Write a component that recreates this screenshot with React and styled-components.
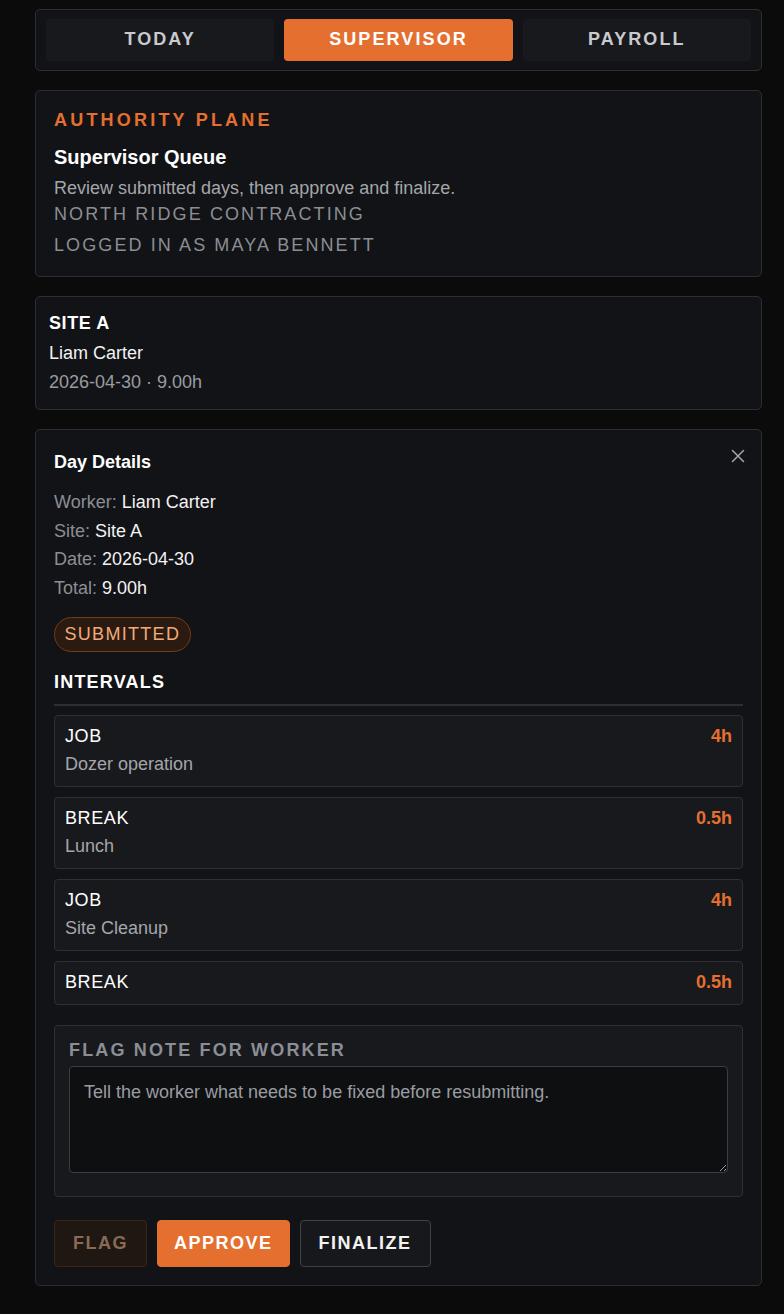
import React, { useState } from 'react';
import styled, { createGlobalStyle } from 'styled-components';

const GlobalStyle = createGlobalStyle`
  * { box-sizing: border-box; }
  body {
    margin: 0;
    background: #0b0b0c;
    font-family: "Liberation Sans", Arial, sans-serif;
    font-size: 18px;
    color: #f2f2f3;
  }
`;

const Page = styled.div`
  width: 784px;
  padding: 9px 22px 28px 35px;
  display: flex;
  flex-direction: column;
  gap: 19px;
`;

const Card = styled.section`
  background: #121316;
  border: 1.5px solid #2c2e33;
  border-radius: 5px;
  padding: ${({ pad }) => pad || '18px'};
  position: relative;
`;

const TabBar = styled(Card)`
  display: grid;
  grid-template-columns: repeat(3, 1fr);
  gap: 10px;
  padding: 8.5px 10px 9.5px;
`;

const Tab = styled.button`
  height: 42px;
  border: none;
  border-radius: 4px;
  background: ${({ active }) => (active ? '#e56f2f' : '#18191d')};
  color: ${({ active }) => (active ? '#ffffff' : '#c9cacd')};
  font-family: inherit;
  font-size: 18px;
  font-weight: 700;
  letter-spacing: 2.1px;
  cursor: pointer;
`;

const Eyebrow = styled.div`
  color: #e56f2f;
  font-size: 18px;
  font-weight: 700;
  letter-spacing: 3.2px;
  line-height: 21px;
`;

const Title = styled.h2`
  margin: 15px 0 0;
  font-size: 20px;
  line-height: 23px;
  font-weight: 700;
  color: #ffffff;
`;

const Muted = styled.p`
  margin: 9px 0 0;
  font-size: 18px;
  line-height: 21px;
  color: #a4a6ab;
`;

const Caps = styled.div`
  margin-top: ${({ mt }) => mt || '5px'};
  font-size: 18px;
  line-height: 21px;
  letter-spacing: 2.1px;
  color: #8b8e94;
`;

const SiteName = styled.div`
  font-size: 18px;
  line-height: 21px;
  font-weight: 700;
  letter-spacing: 0.6px;
  color: #ffffff;
`;

const Line = styled.div`
  font-size: 18px;
  line-height: 21px;
  color: ${({ dim }) => (dim ? '#9a9ca1' : '#f2f2f3')};
  margin-top: ${({ mt }) => mt || '9px'};
`;

const DetailTitle = styled.h3`
  margin: 4px 0 0;
  font-size: 18px;
  line-height: 21px;
  font-weight: 700;
  color: #ffffff;
`;

const CloseButton = styled.button`
  position: absolute;
  top: 15px;
  right: 12px;
  background: none;
  border: none;
  padding: 4px;
  color: #a4a6ab;
  cursor: pointer;
  display: flex;
`;

const Facts = styled.div`
  margin-top: 19px;
  display: flex;
  flex-direction: column;
  gap: 7.5px;
`;

const Fact = styled.div`
  font-size: 18px;
  line-height: 21px;
  color: #f2f2f3;
  span { color: #8b8e94; }
`;

const Badge = styled.span`
  display: inline-block;
  margin-top: 18.5px;
  padding: 6px 9.5px;
  border-radius: 999px;
  border: 1.5px solid #7a3a14;
  background: #2a1a10;
  color: #f3aa7a;
  font-size: 18px;
  letter-spacing: 1.3px;
  line-height: 21px;
`;

const SectionHead = styled.div`
  margin-top: 20px;
  padding-bottom: 10.5px;
  border-bottom: 2px solid #2c2e33;
  font-size: 18px;
  line-height: 21px;
  font-weight: 700;
  letter-spacing: 1.2px;
  color: #ffffff;
`;

const IntervalList = styled.div`
  margin-top: 9px;
  display: flex;
  flex-direction: column;
  gap: 10px;
`;

const Interval = styled.div`
  background: #18191d;
  border: 1.5px solid #2e3036;
  border-radius: 4px;
  padding: 10.5px 10px;
`;

const IntervalTop = styled.div`
  display: flex;
  justify-content: space-between;
  align-items: baseline;
  font-size: 18px;
  line-height: 21px;
`;

const Kind = styled.span`
  color: #ffffff;
  letter-spacing: 0.6px;
`;

const Hours = styled.span`
  color: #e56f2f;
  font-weight: 700;
`;

const IntervalNote = styled.div`
  margin-top: 7px;
  font-size: 18px;
  line-height: 21px;
  color: #a4a6ab;
`;

const NoteBox = styled.div`
  margin-top: 20px;
  background: #18191d;
  border: 1.5px solid #2e3036;
  border-radius: 4px;
  padding: 14px 14px 23px;
`;

const NoteLabel = styled.label`
  display: block;
  font-size: 18px;
  line-height: 21px;
  font-weight: 700;
  letter-spacing: 2.15px;
  color: #8b8e94;
  margin-bottom: 5px;
`;

const NoteInput = styled.textarea`
  display: block;
  width: 100%;
  height: 107px;
  background: #0e0f11;
  border: 1.5px solid #3a3d44;
  border-radius: 4px;
  padding: 15px 14px;
  color: #f2f2f3;
  font-family: inherit;
  font-size: 18px;
  line-height: 21px;
  resize: vertical;
  &::placeholder { color: #9a9ca1; }
  &:focus { outline: none; }
`;

const Actions = styled.div`
  margin-top: 23px;
  display: flex;
  gap: 10px;
`;

const variants = {
  flag: 'background:#1e1712; border:1.5px solid #3d2414; color:#8a6a55;',
  approve: 'background:#e56f2f; border:1.5px solid #e56f2f; color:#ffffff; padding: 0 16px;',
  finalize: 'background:#17181c; border:1.5px solid #3e4148; color:#f2f2f3;',
};

const ActionButton = styled.button`
  height: 47px;
  padding: 0 18px;
  border-radius: 4px;
  font-family: inherit;
  font-size: 18px;
  font-weight: 700;
  letter-spacing: 1.5px;
  cursor: pointer;
  ${({ variant }) => variants[variant]}
`;

const intervals = [
  { kind: 'JOB', hours: '4h', note: 'Dozer operation' },
  { kind: 'BREAK', hours: '0.5h', note: 'Lunch' },
  { kind: 'JOB', hours: '4h', note: 'Site Cleanup' },
  { kind: 'BREAK', hours: '0.5h' },
];

const App = () => {
  const [tab, setTab] = useState('SUPERVISOR');
  const [note, setNote] = useState('');

  return (
    <>
      <GlobalStyle />
      <Page>
        <TabBar as="nav">
          {['TODAY', 'SUPERVISOR', 'PAYROLL'].map((t) => (
            <Tab key={t} active={tab === t} onClick={() => setTab(t)}>
              {t}
            </Tab>
          ))}
        </TabBar>

        <Card pad="19px 18px 20px">
          <Eyebrow>AUTHORITY PLANE</Eyebrow>
          <Title>Supervisor Queue</Title>
          <Muted>Review submitted days, then approve and finalize.</Muted>
          <Caps mt="5px">NORTH RIDGE CONTRACTING</Caps>
          <Caps mt="10px">LOGGED IN AS MAYA BENNETT</Caps>
        </Card>

        <Card pad="16px 13px 16px">
          <SiteName>SITE A</SiteName>
          <Line mt="9px">Liam Carter</Line>
          <Line dim mt="8px">2026-04-30 · 9.00h</Line>
        </Card>

        <Card>
          <DetailTitle>Day Details</DetailTitle>
          <CloseButton aria-label="Close">
            <svg width="14" height="14" viewBox="0 0 14 14" fill="none" stroke="currentColor" strokeWidth="1.5" strokeLinecap="round">
              <path d="M1.5 1.5l11 11M12.5 1.5l-11 11" />
            </svg>
          </CloseButton>
          <Facts>
            <Fact><span>Worker:</span> Liam Carter</Fact>
            <Fact><span>Site:</span> Site A</Fact>
            <Fact><span>Date:</span> 2026-04-30</Fact>
            <Fact><span>Total:</span> 9.00h</Fact>
          </Facts>
          <Badge>SUBMITTED</Badge>
          <SectionHead>INTERVALS</SectionHead>
          <IntervalList>
            {intervals.map((iv, i) => (
              <Interval key={i}>
                <IntervalTop>
                  <Kind>{iv.kind}</Kind>
                  <Hours>{iv.hours}</Hours>
                </IntervalTop>
                {iv.note && <IntervalNote>{iv.note}</IntervalNote>}
              </Interval>
            ))}
          </IntervalList>
          <NoteBox>
            <NoteLabel htmlFor="flag-note">FLAG NOTE FOR WORKER</NoteLabel>
            <NoteInput
              id="flag-note"
              value={note}
              onChange={(e) => setNote(e.target.value)}
              placeholder="Tell the worker what needs to be fixed before resubmitting."
            />
          </NoteBox>
          <Actions>
            <ActionButton variant="flag">FLAG</ActionButton>
            <ActionButton variant="approve">APPROVE</ActionButton>
            <ActionButton variant="finalize">FINALIZE</ActionButton>
          </Actions>
        </Card>
      </Page>
    </>
  );
};

export default App;
